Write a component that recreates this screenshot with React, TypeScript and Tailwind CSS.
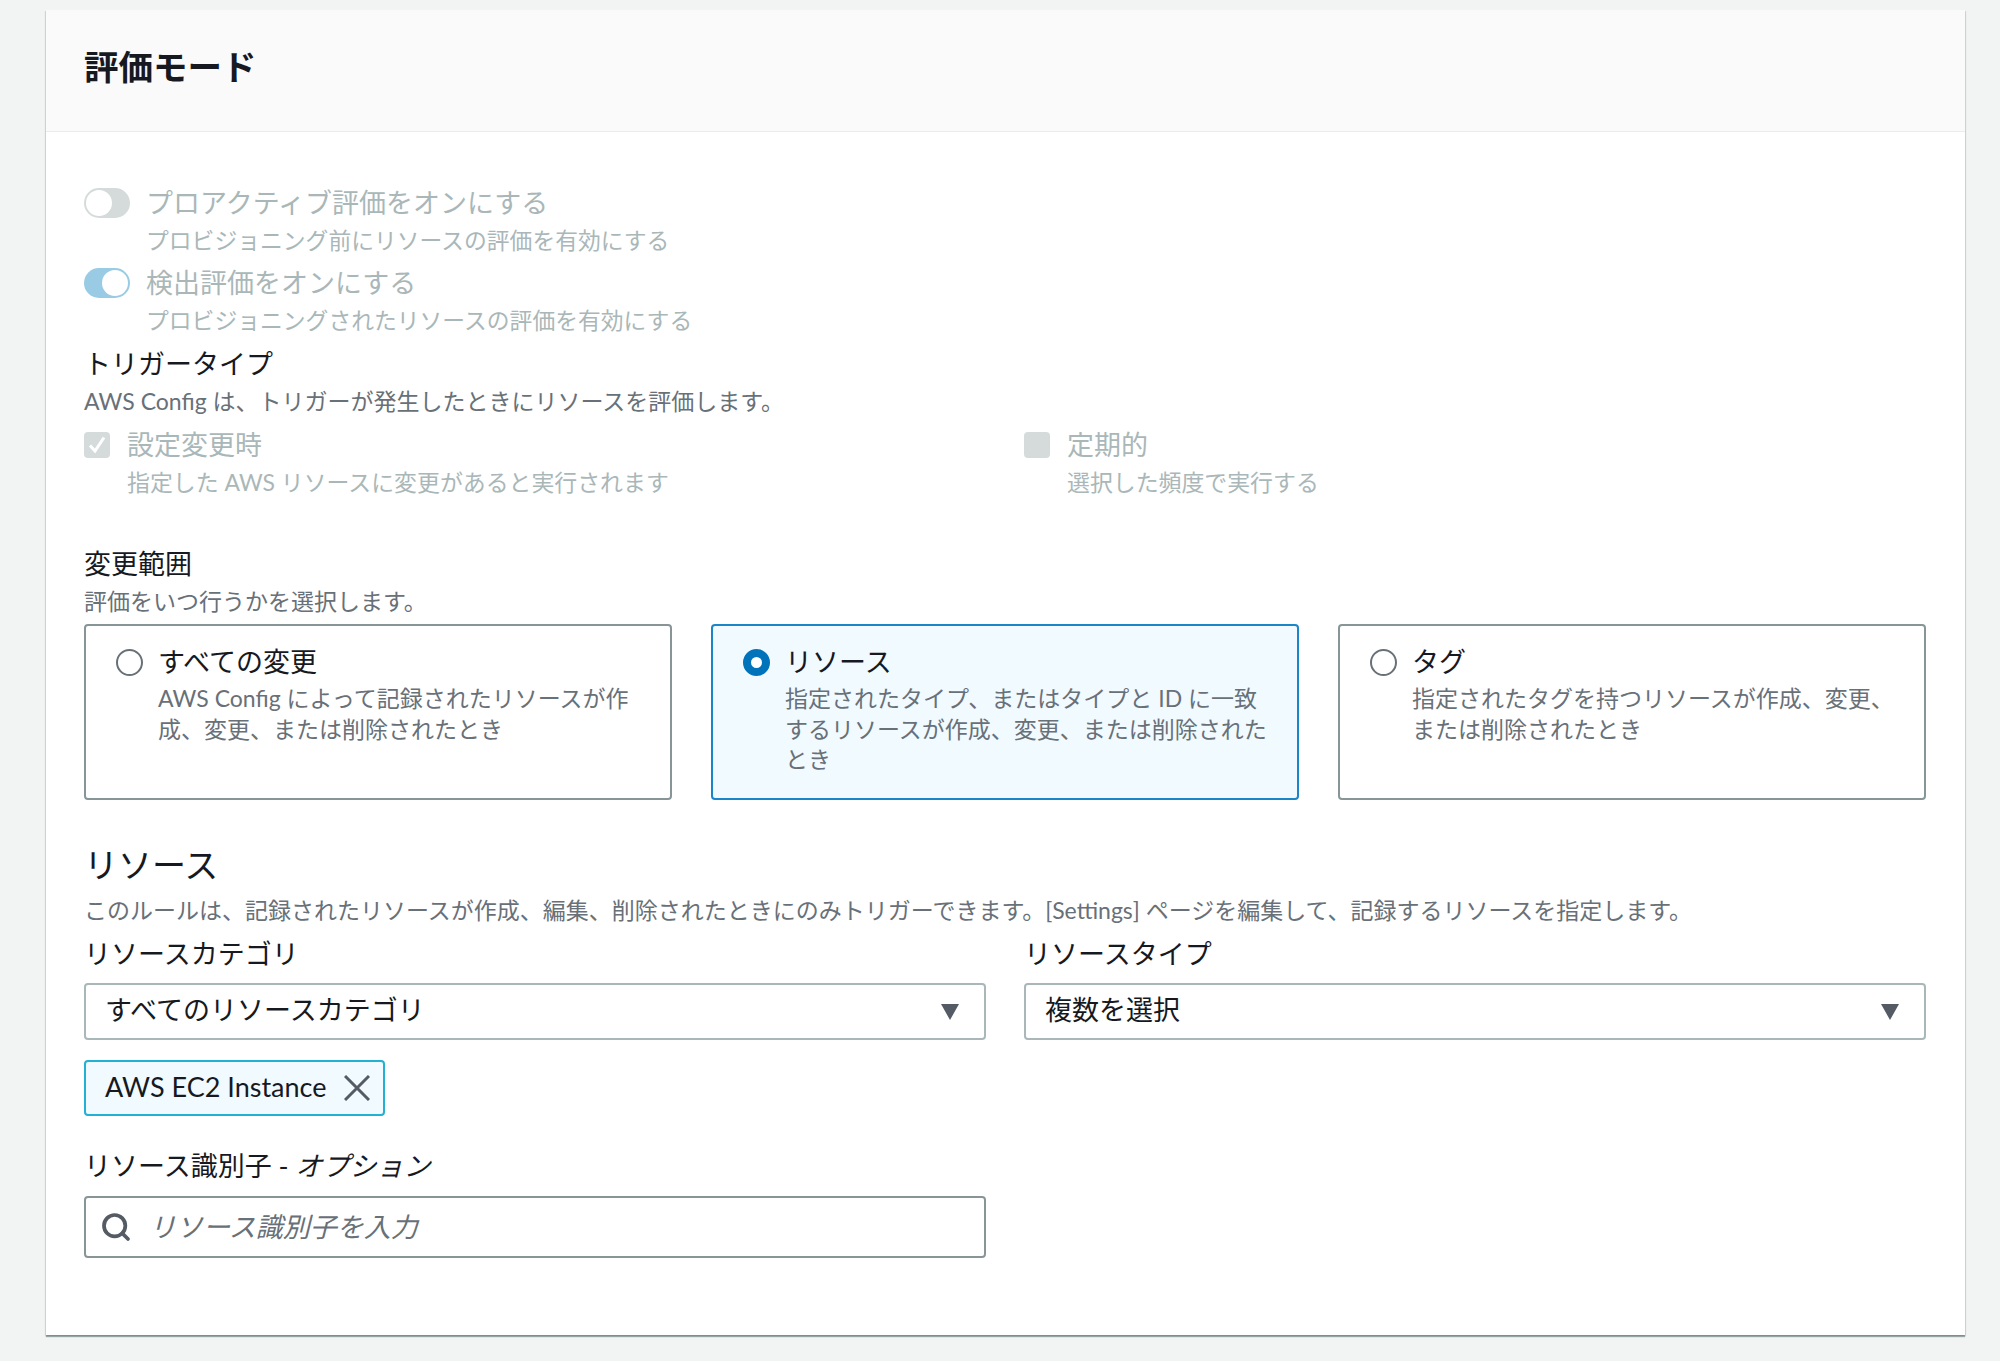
import { Search } from 'lucide-react';

const tiles = [
  {
    title: 'すべての変更',
    desc: 'AWS Config によって記録されたリソースが作成、変更、または削除されたとき',
    selected: false,
  },
  {
    title: 'リソース',
    desc: '指定されたタイプ、またはタイプと ID に一致するリソースが作成、変更、または削除されたとき',
    selected: true,
  },
  {
    title: 'タグ',
    desc: '指定されたタグを持つリソースが作成、変更、または削除されたとき',
    selected: false,
  },
];

function Toggle({ on, label, desc }: { on: boolean; label: string; desc: string }) {
  return (
    <div className="flex gap-[16px]">
      <div className="h-10 flex items-center">
        <div
          className={`w-[46px] h-[30px] rounded-full flex items-center px-[2px] ${
            on ? 'bg-[#99cbe4] justify-end' : 'bg-[#d5dbdb] justify-start'
          }`}
        >
          <div className="w-[26px] h-[26px] rounded-full bg-white" />
        </div>
      </div>
      <div>
        <div className="h-10 leading-10 text-[27px] text-[#aab7b8]">{label}</div>
        <div className="h-9 leading-[34px] text-[22.8px] text-[#aab7b8]">{desc}</div>
      </div>
    </div>
  );
}

function DisabledCheck({ checked, label, desc }: { checked: boolean; label: string; desc: string }) {
  return (
    <div className="flex gap-[17px]">
      <div className="h-10 flex items-center">
        <div className="w-[26px] h-[26px] rounded bg-[#d5dbdb] flex items-center justify-center">
          {checked && (
            <svg width="22" height="22" viewBox="0 0 22 22" fill="none">
              <path d="M4 11.5l5 5.5L18 3.5" stroke="white" strokeWidth="3" />
            </svg>
          )}
        </div>
      </div>
      <div>
        <div className="h-10 leading-10 text-[27px] text-[#aab7b8]">{label}</div>
        <div className="h-9 leading-[34px] text-[22.9px] text-[#aab7b8]">{desc}</div>
      </div>
    </div>
  );
}

function Tile({ title, desc, selected }: { title: string; desc: string; selected: boolean }) {
  return (
    <div
      className={`h-[176px] rounded border-2 pl-[30px] pr-[25px] pt-[16px] flex gap-[15px] ${
        selected ? 'border-[#1a85c9] bg-[#f1faff]' : 'border-[#879596] bg-white'
      }`}
    >
      <div className="h-10 flex items-center shrink-0">
        {selected ? (
          <div className="w-[27px] h-[27px] rounded-full border-[8px] border-[#0073bb] bg-white" />
        ) : (
          <div className="w-[27px] h-[27px] rounded-full border-2 border-[#687078] bg-white" />
        )}
      </div>
      <div>
        <div className="h-10 leading-10 text-[27px] text-[#16191f]">{title}</div>
        <div className="mt-[1px] leading-[30.5px] text-[23px] text-[#687078]">{desc}</div>
      </div>
    </div>
  );
}

function SelectBox({ text }: { text: string }) {
  return (
    <div className="h-[57px] rounded border-2 border-[#aab7b8] bg-white flex items-center justify-between pl-[19px] pr-[24px]">
      <span className="text-[27px] text-[#16191f] -mt-[2px]">{text}</span>
      <svg width="20" height="16" viewBox="0 0 20 16">
        <path d="M1 0h18L10 16z" fill="#545b64" />
      </svg>
    </div>
  );
}

export default function App() {
  return (
    <div
      className="h-[1361px] bg-[#f2f3f3] pt-[10px] pl-[46px] pr-[35px] overflow-hidden text-[#16191f]"
      style={{ fontFamily: '"Lato", "Noto Sans CJK JP", sans-serif' }}
    >
      <div className="h-[1325px] bg-white shadow-[0_2px_1px_0_rgba(0,28,36,0.35),1px_1px_1px_0_rgba(0,28,36,0.1),-1px_1px_1px_0_rgba(0,28,36,0.1)]">
        <div className="h-[122px] bg-[#fafafa] border-b border-[#eaeded] pl-[38px] pr-[39px] flex items-center">
          <h2 className="text-[34.5px] font-bold -mt-[8px]">評価モード</h2>
        </div>

        <div className="pl-[38px] pr-[39px] pt-[51px]">
          <div className="flex flex-col gap-1">
            <Toggle on={false} label="プロアクティブ評価をオンにする" desc="プロビジョニング前にリソースの評価を有効にする" />
            <Toggle on label="検出評価をオンにする" desc="プロビジョニングされたリソースの評価を有効にする" />
          </div>

          <div className="mt-[5px] h-10 leading-10 text-[27px]">トリガータイプ</div>
          <div className="h-9 leading-[34px] text-[23px] text-[#687078]">AWS Config は、トリガーが発生したときにリソースを評価します。</div>

          <div className="mt-[5px] grid grid-cols-2 gap-[38px]">
            <DisabledCheck checked label="設定変更時" desc="指定した AWS リソースに変更があると実行されます" />
            <DisabledCheck checked={false} label="定期的" desc="選択した頻度で実行する" />
          </div>

          <div className="mt-[43px] h-10 leading-10 text-[27px]">変更範囲</div>
          <div className="h-9 leading-[34px] text-[23px] text-[#687078]">評価をいつ行うかを選択します。</div>

          <div className="mt-[4px] grid grid-cols-3 gap-[39px]">
            {tiles.map((t) => (
              <Tile key={t.title} {...t} />
            ))}
          </div>

          <div className="mt-[40px] h-[50px] leading-[50px] text-[34px]">リソース</div>
          <div className="mt-[3px] h-9 leading-[34px] text-[23px] text-[#687078] whitespace-nowrap">
            このルールは、記録されたリソースが作成、編集、削除されたときにのみトリガーできます。[Settings] ページを編集して、記録するリソースを指定します。
          </div>

          <div className="mt-[5px] grid grid-cols-2 gap-[38px]">
            <div>
              <div className="h-10 leading-10 text-[27px]">リソースカテゴリ</div>
              <div className="mt-[9px]">
                <SelectBox text="すべてのリソースカテゴリ" />
              </div>
              <div className="mt-[20px] w-[301px] h-[56px] rounded border-2 border-[#22b0d3] bg-[#f1faff] flex items-center justify-between pl-[19px] pr-[13px]">
                <span className="text-[27px] -mt-[2px]">AWS EC2 Instance</span>
                <svg width="26" height="26" viewBox="0 0 26 26" fill="none">
                  <path d="M1 1l24 24M25 1L1 25" stroke="#545b64" strokeWidth="3" />
                </svg>
              </div>
              <div className="mt-[30px] h-10 leading-10 text-[27px]">
                リソース識別子 - <i>オプション</i>
              </div>
              <div className="mt-[10px] h-[62px] rounded border-2 border-[#879596] bg-white flex items-center pl-[14px] gap-[17px]">
                <Search size={32} strokeWidth={2.8} className="text-[#545b64] shrink-0" />
                <input
                  placeholder="リソース識別子を入力"
                  className="w-full bg-transparent outline-none text-[27px] italic placeholder:text-[#687078]"
                />
              </div>
            </div>
            <div>
              <div className="h-10 leading-10 text-[27px]">リソースタイプ</div>
              <div className="mt-[9px]">
                <SelectBox text="複数を選択" />
              </div>
            </div>
          </div>
        </div>
      </div>
    </div>
  );
}
